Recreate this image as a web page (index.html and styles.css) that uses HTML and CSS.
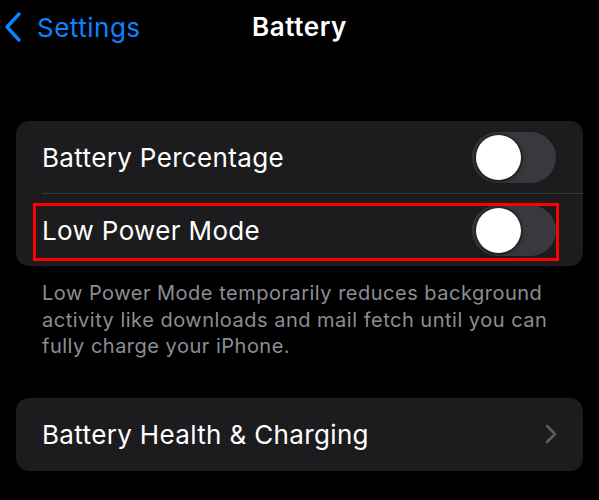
FILE: index.html
```html
<!DOCTYPE html>
<html>
<head>
    <link rel="stylesheet" href="styles.css">
</head>
<body>
    <div class="nav">
        <a class="back">
            <svg width="20" height="32" viewBox="0 0 20 32" fill="none" stroke="currentColor" stroke-width="3.4" stroke-linecap="round" stroke-linejoin="round">
                <polyline points="16 3 4 16 16 29"></polyline>
            </svg>
            <span>Settings</span>
        </a>
        <div class="title">Battery</div>
    </div>

    <div class="group">
        <div class="row">
            <span class="label">Battery Percentage</span>
            <span class="toggle"><span class="knob"></span></span>
        </div>
        <div class="row highlighted">
            <span class="label">Low Power Mode</span>
            <span class="toggle"><span class="knob"></span></span>
            <span class="marker"></span>
        </div>
    </div>

    <p class="footnote">Low Power Mode temporarily reduces background activity like downloads and mail fetch until you can fully charge your iPhone.</p>

    <div class="group second">
        <div class="row">
            <span class="label">Battery Health &amp; Charging</span>
            <svg class="chevron" width="14" height="20" viewBox="0 0 14 20" fill="none" stroke="currentColor" stroke-width="2.6" stroke-linecap="round" stroke-linejoin="round">
                <polyline points="3 2 11 10 3 18"></polyline>
            </svg>
        </div>
    </div>
</body>
</html>
```

FILE: styles.css
```css
body {
    margin: 0;
    padding: 0;
    background: #000;
    color: #fff;
    font-family: Inter, "Noto Sans", sans-serif;
    width: 599px;
    height: 500px;
    overflow: hidden;
}

.nav {
    height: 54px;
    display: flex;
    align-items: center;
    position: relative;
}

.back {
    display: flex;
    align-items: center;
    gap: 14px;
    padding-left: 3px;
    color: #0a84ff;
    font-size: 26px;
    letter-spacing: 0.5px;
}

.title {
    position: absolute;
    left: 252px;
    top: 0;
    line-height: 54px;
    font-size: 26px;
    font-weight: 600;
    letter-spacing: 0.6px;
}

.group {
    margin: 67px 16px 0;
    background: #1c1c1e;
    border-radius: 13px;
    overflow: hidden;
}

.row {
    height: 72px;
    display: flex;
    align-items: center;
    justify-content: space-between;
    margin-left: 26px;
    padding-right: 27px;
    font-size: 26px;
    letter-spacing: 0.35px;
    position: relative;
}

.row + .row {
    border-top: 1px solid #38383a;
}

.toggle {
    width: 84px;
    height: 51px;
    border-radius: 26px;
    background: #39393d;
    display: flex;
    align-items: center;
    padding-left: 4px;
    box-sizing: border-box;
}

.knob {
    width: 45px;
    height: 45px;
    border-radius: 50%;
    background: #fff;
    box-shadow: 0 0 0 2px rgba(0, 0, 0, 0.25), 0 2px 6px rgba(0, 0, 0, 0.3);
}

.marker {
    position: absolute;
    left: -9px;
    right: 24px;
    top: 9px;
    bottom: 5px;
    border: 3px solid #ff0000;
}

.footnote {
    margin: 14px 30px 0 42px;
    font-size: 20px;
    line-height: 26.5px;
    letter-spacing: 0.5px;
    color: #8d8d93;
}

.group.second {
    margin-top: 38px;
}

.group.second .row {
    height: 73px;
    padding-right: 25px;
}

.chevron {
    color: #5b5b60;
}
```
